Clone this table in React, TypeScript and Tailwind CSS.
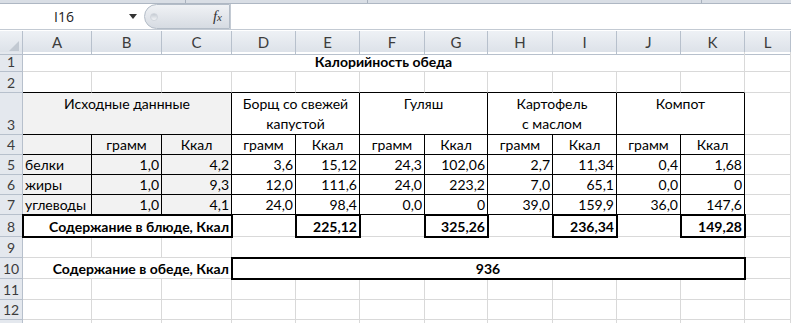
import React from "react";

const COLS =
  "grid grid-cols-[23px_69px_70px_70px_64px_64px_65px_63px_65px_64px_64px_64px_46px]";

const GRID = "border-r border-b border-[#d9d9d9]";
const LINE = "border-r border-b border-black";
const THICK = "relative z-10 outline-2 outline-black -outline-offset-1";
const GRAY = "bg-[#f2f2f2]";

type CellProps = {
  span?: string;
  className?: string;
  align?: "left" | "right" | "center";
  children?: React.ReactNode;
};

function Cell({ span = "", className = GRID, align = "left", children }: CellProps) {
  const justify =
    align === "right" ? "justify-end text-right" : align === "center" ? "justify-center text-center" : "justify-start";
  return (
    <div className={`${span} ${className} flex items-end ${justify} px-[2px] leading-[19px] whitespace-nowrap overflow-visible`}>
      {children}
    </div>
  );
}

function RowHead({ n }: { n?: number }) {
  return (
    <div className="flex items-end justify-center bg-[#e4e8ee] border-r border-b border-[#b7c0cc] text-[14px] leading-[19px] text-[#3c3c3c]">
      {n}
    </div>
  );
}

const data = [
  ["белки", "1,0", "4,2", "3,6", "15,12", "24,3", "102,06", "2,7", "11,34", "0,4", "1,68"],
  ["жиры", "1,0", "9,3", "12,0", "111,6", "24,0", "223,2", "7,0", "65,1", "0,0", "0"],
  ["углеводы", "1,0", "4,1", "24,0", "98,4", "0,0", "0", "39,0", "159,9", "36,0", "147,6"],
];

const dishes = [
  ["Борщ со свежей", "капустой"],
  ["Гуляш"],
  ["Картофель", "с маслом"],
  ["Компот"],
];

const totals = ["225,12", "325,26", "236,34", "149,28"];

export default function App() {
  return (
    <div className="w-[791px] h-[323px] overflow-hidden bg-white font-[Lato,'Open_Sans',sans-serif] text-[14px] text-black">
      {/* ribbon edge */}
      <div className="h-[4px] flex bg-[#d9dee5] border-b border-[#aeb7c3]">
        <div className="w-[186px] border-r border-[#a9b2be]" />
        <div className="w-[182px] border-r border-[#a9b2be]" />
        <div className="w-[334px] border-r border-[#a9b2be]" />
      </div>

      {/* formula bar */}
      <div className="h-[26px] flex bg-white border-b border-[#c3cad3]">
        <div className="w-[144px] flex items-center">
          <span className="ml-[54px] text-[14px] font-['Open_Sans',sans-serif] text-[#222]">I16</span>
          <svg className="ml-auto mr-[7px]" width="8" height="5" viewBox="0 0 8 5">
            <path d="M0 0h8L4 5z" fill="#333" />
          </svg>
        </div>
        <div className="w-[86px] flex items-center rounded-l-full bg-gradient-to-b from-[#f0f2f5] to-[#d6dbe2] border border-[#b3bcc7]">
          <div className="ml-[5px] w-[8px] h-[8px] rounded-full bg-gradient-to-b from-[#c4cad2] to-[#f4f6f8] border border-[#d0d5dc]" />
          <span className="ml-auto mr-[7px] italic font-['Liberation_Serif',serif] text-[15px] text-[#333] leading-none">
            f<span className="text-[11px]">x</span>
          </span>
        </div>
        <div className="flex-1 bg-white border-l border-[#c3cad3]" />
      </div>
      <div className="h-[1px] bg-white" />

      {/* column headers */}
      <div className={`${COLS} h-[21px] bg-gradient-to-b from-[#eef1f5] to-[#dde2e9] text-[#3c3c3c] text-[15px]`}>
        <div className="relative border-r border-b border-[#b7c0cc]">
          <svg className="absolute right-[3px] bottom-[3px]" width="10" height="10" viewBox="0 0 10 10">
            <path d="M10 0v10H0z" fill="#c2c9d2" />
          </svg>
        </div>
        {"ABCDEFGHIJKL".split("").map((c) => (
          <div key={c} className="flex items-center justify-center border-r border-b border-[#b7c0cc]">
            {c}
          </div>
        ))}
      </div>

      {/* row 1 */}
      <div className={`${COLS} h-[20px]`}>
        <RowHead n={1} />
        <Cell span="col-span-11" align="center" className={`${GRID} font-bold`}>
          Калорийность обеда
        </Cell>
        <Cell />
      </div>

      {/* row 2 */}
      <div className={`${COLS} h-[21px]`}>
        <RowHead n={2} />
        {Array.from({ length: 11 }).map((_, i) => (
          <Cell key={i} className="border-r border-[#d9d9d9] border-b border-b-black" />
        ))}
        <Cell />
      </div>

      {/* row 3 */}
      <div className={`${COLS} h-[42px]`}>
        <RowHead n={3} />
        <div className={`col-span-3 ${LINE} ${GRAY} flex justify-center pt-[1px] leading-[20px]`}>
          Исходные даннные
        </div>
        {dishes.map((d, i) => (
          <div key={i} className={`col-span-2 ${LINE} flex flex-col items-center pt-[1px] leading-[20px]`}>
            {d.map((line) => (
              <span key={line}>{line}</span>
            ))}
          </div>
        ))}
        <Cell />
      </div>

      {/* row 4 */}
      <div className={`${COLS} h-[20px]`}>
        <RowHead n={4} />
        <Cell className={`${LINE} ${GRAY}`} />
        <Cell className={`${LINE} ${GRAY}`} align="center">грамм</Cell>
        <Cell className={`${LINE} ${GRAY}`} align="center">Ккал</Cell>
        {Array.from({ length: 4 }).map((_, i) => (
          <React.Fragment key={i}>
            <Cell className={LINE} align="center">грамм</Cell>
            <Cell className={LINE} align="center">Ккал</Cell>
          </React.Fragment>
        ))}
        <Cell />
      </div>

      {/* rows 5-7 */}
      {data.map((r, ri) => (
        <div key={ri} className={`${COLS} h-[20px]`}>
          <RowHead n={5 + ri} />
          {r.map((v, ci) => (
            <Cell
              key={ci}
              className={`${LINE} ${ci < 3 ? GRAY : ""}`}
              align={ci === 0 ? "left" : "right"}
            >
              {v}
            </Cell>
          ))}
          <Cell />
        </div>
      ))}

      {/* row 8 */}
      <div className={`${COLS} h-[22px]`}>
        <RowHead n={8} />
        <Cell span="col-span-3" className={`${GRID} ${THICK} font-bold`} align="right">
          Содержание в блюде, Ккал
        </Cell>
        {totals.map((t) => (
          <React.Fragment key={t}>
            <Cell />
            <Cell className={`${GRID} ${THICK} font-bold`} align="right">
              {t}
            </Cell>
          </React.Fragment>
        ))}
        <Cell />
      </div>

      {/* row 9 */}
      <div className={`${COLS} h-[21px]`}>
        <RowHead n={9} />
        <Cell />
        <Cell />
        <Cell />
        <Cell span="col-span-8" />
        <Cell />
      </div>

      {/* row 10 */}
      <div className={`${COLS} h-[21px]`}>
        <RowHead n={10} />
        <Cell span="col-span-3" className={`${GRID} font-bold`} align="right">
          Содержание в обеде, Ккал
        </Cell>
        <Cell span="col-span-8" className={`${GRID} ${THICK} font-bold`} align="center">
          936
        </Cell>
        <Cell />
      </div>

      {/* rows 11-13 */}
      {[11, 12, 13].map((n) => (
        <div key={n} className={`${COLS} ${n === 11 ? "h-[21px]" : "h-[20px]"}`}>
          <RowHead n={n < 13 ? n : undefined} />
          {Array.from({ length: 12 }).map((_, i) => (
            <Cell key={i} />
          ))}
        </div>
      ))}
    </div>
  );
}
